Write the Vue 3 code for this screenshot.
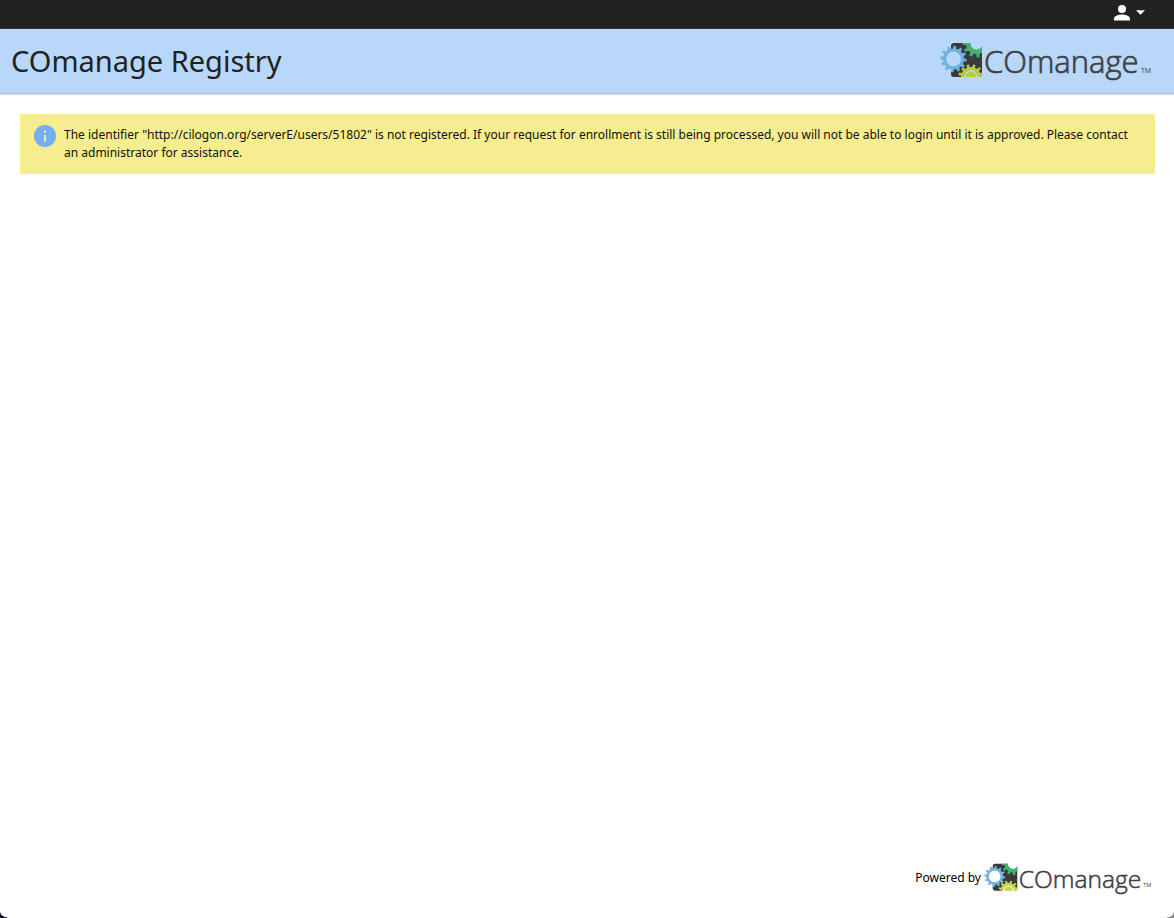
<script setup>
function gear(cx, cy, outer, body, hole, teeth, turn) {
  const step = (Math.PI * 2) / teeth
  const at = (r, a) => `${(cx + r * Math.cos(a)).toFixed(2)} ${(cy + r * Math.sin(a)).toFixed(2)}`
  const points = []
  for (let i = 0; i < teeth; i++) {
    const a = turn + i * step
    points.push(at(body, a - step * 0.27), at(outer, a - step * 0.18), at(outer, a + step * 0.18), at(body, a + step * 0.27))
  }
  const ring = `M${cx - hole} ${cy}a${hole} ${hole} 0 1 0 ${hole * 2} 0a${hole} ${hole} 0 1 0 ${-hole * 2} 0Z`
  return `M${points.join('L')}Z${ring}`
}

const blue = gear(13.5, 18, 13.2, 10.6, 7.4, 12, 0.1)
const green = gear(36.5, 2.5, 14, 10.6, 6.2, 11, 0.3)
const lime = gear(31, 36, 12.8, 10, 7, 12, 0.26)

const message =
  'The identifier "http://cilogon.org/serverE/users/51802" is not registered. If your request for enrollment is still being processed, you will not be able to login until it is approved. Please contact an administrator for assistance.'
</script>

<template>
  <div class="page">
    <nav class="topbar" aria-label="User">
      <button class="user" type="button" aria-label="User menu">
        <svg class="person" viewBox="0 0 16 16" aria-hidden="true">
          <circle cx="8" cy="4" r="4" />
          <path d="M0 15.5v-2c0-2.7 5.3-4 8-4s8 1.3 8 4v2z" />
        </svg>
        <svg class="caret" viewBox="0 0 10 5" aria-hidden="true"><path d="M0 0h10L5 5z" /></svg>
      </button>
    </nav>

    <header class="banner">
      <h1>COmanage Registry</h1>
      <svg class="logo" viewBox="0 0 212 40" role="img" aria-label="COmanage">
        <defs>
          <clipPath id="logo-clip"><rect x="12" y="2" width="30" height="34" /></clipPath>
          <mask id="logo-mask">
            <rect width="212" height="40" fill="#fff" />
            <circle cx="13.5" cy="18" r="8" fill="#000" />
            <circle cx="36.5" cy="2.5" r="6.4" fill="#000" />
            <circle cx="31" cy="36" r="7.2" fill="#000" />
          </mask>
        </defs>
        <rect x="11" y="2" width="31" height="34" rx="3" fill="#393a3c" mask="url(#logo-mask)" />
        <g clip-path="url(#logo-clip)">
          <path :d="green" fill="#42b36c" fill-rule="evenodd" />
          <path :d="lime" fill="#b9cc35" fill-rule="evenodd" />
          <circle cx="31" cy="36" r="5.4" fill="#b9cc35" />
        </g>
        <path :d="blue" fill="#6fb1e1" fill-rule="evenodd" />
        <text class="word" x="44" y="32">COmanage</text>
        <text class="mark" x="201" y="32">TM</text>
      </svg>
    </header>

    <main>
      <div class="notice" role="status">
        <svg class="info" viewBox="0 0 22 22" aria-hidden="true">
          <circle cx="11" cy="11" r="11" fill="#75aef2" />
          <path d="M10 5.5h2v2.2h-2zM10 10h2v6.5h-2z" fill="#f5ed8f" />
        </svg>
        <p>{{ message }}</p>
      </div>
    </main>

    <footer>
      <span>Powered by</span>
      <svg class="logo small" viewBox="0 0 212 40" role="img" aria-label="COmanage">
        <rect x="11" y="2" width="31" height="34" rx="3" fill="#393a3c" mask="url(#logo-mask)" />
        <g clip-path="url(#logo-clip)">
          <path :d="green" fill="#42b36c" fill-rule="evenodd" />
          <path :d="lime" fill="#c3d83c" fill-rule="evenodd" />
          <circle cx="31" cy="36" r="5.2" fill="#c3d83c" />
        </g>
        <path :d="blue" fill="#72b5e4" fill-rule="evenodd" />
        <text class="word" x="44" y="32">COmanage</text>
        <text class="mark" x="201" y="32">TM</text>
      </svg>
    </footer>
    <i class="corner left"></i>
    <i class="corner right"></i>
  </div>
</template>

<style>
body {
  margin: 0;
  background: #fff;
}
</style>

<style scoped>
.page {
  position: relative;
  display: flex;
  flex-direction: column;
  min-height: 100vh;
  overflow: hidden;
  background: #fff;
  color: #222;
  font-family: "Noto Sans", sans-serif;
  font-size: 12px;
  line-height: 18px;
}
.topbar {
  display: flex;
  justify-content: flex-end;
  box-sizing: border-box;
  height: 29px;
  padding: 0 29px;
  background: #222;
  border-bottom: 1px solid #333;
}
.user {
  display: flex;
  align-items: center;
  gap: 6px;
  height: 25px;
  padding: 0;
  border: 0;
  background: none;
}
.person {
  width: 16px;
  height: 16px;
  fill: #fff;
}
.caret {
  width: 9px;
  height: 5px;
  fill: #fff;
}
.banner {
  display: flex;
  align-items: center;
  justify-content: space-between;
  box-sizing: border-box;
  height: 65px;
  padding: 0 22px 0 11px;
  background: #b8d7f9;
  border-bottom: 1px solid #b3c3d6;
  box-shadow: 0 1px 1px #ddd;
}
h1 {
  margin: 0;
  font-size: 29px;
  font-weight: 400;
  line-height: 40px;
}
.logo {
  width: 212px;
  height: 40px;
  overflow: visible;
}
.logo.small {
  width: 168px;
  height: 32px;
}
.word {
  fill: #404143;
  stroke: #404143;
  stroke-width: 0.7px;
  font-family: "Open Sans", "Noto Sans", sans-serif;
  font-size: 31px;
  font-weight: 300;
}
.mark {
  fill: #404143;
  font-family: "Open Sans", "Noto Sans", sans-serif;
  font-size: 7px;
}
main {
  flex: 1;
  padding: 20px 19px 20px 20px;
}
.notice {
  display: flex;
  gap: 8px;
  padding: 11px 20px 11px 14px;
  background: #f5ed8f;
}
.notice p {
  margin: 1px 0;
  color: #111;
}
.info {
  flex: none;
  width: 22px;
  height: 22px;
}
footer {
  display: flex;
  align-items: center;
  justify-content: flex-end;
  gap: 3px;
  padding: 0 22px 24px;
  color: #000;
}
.corner {
  position: absolute;
  bottom: 0;
  width: 10px;
  height: 6px;
}
.left {
  left: 0;
  background: radial-gradient(10px 6px at 100% 0, #fff 94%, #180f25 100%);
}
.right {
  right: 0;
  background: radial-gradient(10px 6px at 0 0, #fff 94%, #8c8c8c 100%);
}
</style>
